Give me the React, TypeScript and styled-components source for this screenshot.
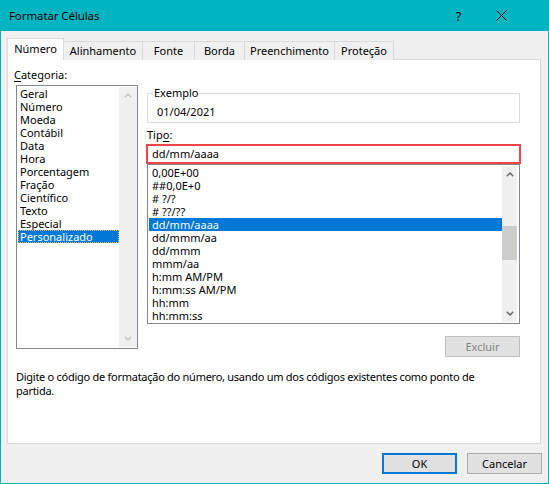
import React from "react";
import styled, { createGlobalStyle, css } from "styled-components";

const FONT = `"Noto Sans", "Open Sans", sans-serif`;

const GlobalStyle = createGlobalStyle`
  html, body { margin: 0; padding: 0; background: #ffffff; }
  body { font-family: ${FONT}; font-size: 11px; color: #000; }
  * { box-sizing: border-box; }
`;

const Window = styled.div`
  width: 549px;
  height: 484px;
  display: flex;
  flex-direction: column;
  background: #f0f0f0;
  border: 1px solid #00b4c2;
  border-top: none;
`;

const TitleBar = styled.div`
  height: 31px;
  flex: none;
  display: flex;
  align-items: center;
  background: #00b4c2;
  margin: 0 -1px;
  padding-left: 9px;
  padding-right: 27px;
`;

const TitleText = styled.div`
  flex: 1;
  font-size: 11.5px;
  line-height: 16px;
  letter-spacing: -0.1px;
  color: #000;
`;

const TitleButton = styled.div<{ $w: number }>`
  width: ${(p) => p.$w}px;
  height: 31px;
  display: flex;
  align-items: center;
  justify-content: center;
  font-size: 13px;
  color: #000;
`;

const Body = styled.div`
  flex: 1;
  display: flex;
  flex-direction: column;
  padding: 7px 7px 0 6px;
`;

const TabStrip = styled.div`
  height: 22px;
  display: flex;
  align-items: flex-end;
  margin-bottom: -1px;
  position: relative;
  z-index: 1;
`;

const Tab = styled.div<{ $active?: boolean; $w: number }>`
  width: ${(p) => p.$w}px;
  display: flex;
  align-items: center;
  justify-content: center;
  border: 1px solid #d9d9d9;
  border-bottom: none;
  margin-left: -1px;
  font-size: 11px;
  line-height: 14px;
  &:first-child { margin-left: 0; }
  ${(p) =>
    p.$active
      ? css`
          height: 22px;
          background: #ffffff;
          padding-bottom: 2px;
          position: relative;
          z-index: 1;
        `
      : css`
          height: 19px;
          background: #f0f0f0;
          padding-bottom: 1px;
        `}
`;

const Panel = styled.div`
  height: 385px;
  flex: none;
  background: #ffffff;
  border: 1px solid #d9d9d9;
  padding: 8px 6px 0 6px;
  display: flex;
  flex-direction: column;
`;

const Columns = styled.div`
  display: grid;
  grid-template-columns: 124px 373px;
  column-gap: 9px;
`;

const Column = styled.div`
  display: flex;
  flex-direction: column;
`;

const FieldLabel = styled.div<{ $mt?: number }>`
  font-size: 11px;
  line-height: 14px;
  margin-top: ${(p) => p.$mt ?? 0}px;
  u { text-decoration-thickness: 1px; text-underline-offset: 2px; }
`;

const ListBox = styled.div<{ $h: number; $ml?: number; $mt?: number; $pad: string }>`
  height: ${(p) => p.$h}px;
  margin-left: ${(p) => p.$ml ?? 0}px;
  margin-top: ${(p) => p.$mt ?? 0}px;
  border: 1px solid #828790;
  background: #ffffff;
  padding: ${(p) => p.$pad};
  display: flex;
`;

const ListItems = styled.div`
  flex: 1;
  display: flex;
  flex-direction: column;
  min-width: 0;
`;

const ListItem = styled.div<{ $selected?: boolean; $focused?: boolean; $pl: number }>`
  height: 13px;
  line-height: 13px;
  font-size: 11px;
  padding-left: ${(p) => p.$pl}px;
  white-space: nowrap;
  color: #000;
  ${(p) =>
    p.$selected &&
    css`
      background: #0078d7;
      color: #ffffff;
    `}
  ${(p) =>
    p.$focused &&
    css`
      outline: 1px dotted #eab35e;
      outline-offset: -1px;
    `}
`;

const ScrollBar = styled.div<{ $w: number }>`
  width: ${(p) => p.$w}px;
  flex: none;
  background: #f0f0f0;
  display: flex;
  flex-direction: column;
`;

const ScrollArrow = styled.div`
  height: 17px;
  flex: none;
  display: flex;
  align-items: center;
  justify-content: center;
`;

const ScrollTrack = styled.div`
  flex: 1;
  display: flex;
  flex-direction: column;
`;

const Thumb = styled.div<{ $top: number; $h: number }>`
  margin-top: ${(p) => p.$top}px;
  height: ${(p) => p.$h}px;
  background: #cdcdcd;
`;

const GroupBox = styled.fieldset`
  margin: 18px 0 0 0;
  padding: 5px 8px 3px 8px;
  border: 1px solid #dcdcdc;
  min-width: 0;
`;

const Legend = styled.legend`
  padding: 0 1px;
  margin-left: -3px;
  font-size: 11px;
  line-height: 14px;
`;

const SampleText = styled.div`
  font-size: 11px;
  line-height: 14px;
  padding-left: 1px;
`;

const TypeInput = styled.div`
  height: 20px;
  margin: 2px -1px 0 -1px;
  border: 2px solid #f0434a;
  background: #ffffff;
  padding-left: 4px;
  display: flex;
  align-items: center;
  font-size: 11px;
  line-height: 14px;
`;

const ActionButton = styled.div<{ $disabled?: boolean }>`
  align-self: flex-end;
  width: 75px;
  height: 21px;
  margin-top: 12px;
  display: flex;
  align-items: center;
  justify-content: center;
  background: #e1e1e1;
  border: 1px solid ${(p) => (p.$disabled ? "#bfbfbf" : "#adadad")};
  color: ${(p) => (p.$disabled ? "#838383" : "#000")};
  font-size: 11px;
`;

const Description = styled.div`
  margin: 13px 0 0 2px;
  font-size: 11px;
  line-height: 14px;
  letter-spacing: -0.27px;
`;

const Footer = styled.div`
  flex: 1;
  display: flex;
  justify-content: flex-end;
  align-items: flex-start;
  gap: 10px;
  padding: 9px 0 0 0;
  margin-right: -1px;
`;

const DialogButton = styled.div<{ $default?: boolean }>`
  width: 75px;
  height: 21px;
  display: flex;
  align-items: center;
  justify-content: center;
  background: #e1e1e1;
  font-size: 11px;
  color: #000;
  border: ${(p) => (p.$default ? "2px solid #0078d7" : "1px solid #adadad")};
`;

const Chevron = ({ up, color }: { up?: boolean; color: string }) => (
  <svg width="8" height="5" viewBox="0 0 8 5">
    <polyline
      points={up ? "0.8,4.3 4,1.1 7.2,4.3" : "0.8,0.7 4,3.9 7.2,0.7"}
      fill="none"
      stroke={color}
      strokeWidth="1.4"
    />
  </svg>
);

const CloseIcon = () => (
  <svg width="11" height="11" viewBox="0 0 11 11">
    <path d="M0.5 0.5 L10.5 10.5 M10.5 0.5 L0.5 10.5" stroke="#000" strokeWidth="1" />
  </svg>
);

const tabs = [
  { label: "Número", w: 57, active: true },
  { label: "Alinhamento", w: 80 },
  { label: "Fonte", w: 53 },
  { label: "Borda", w: 51 },
  { label: "Preenchimento", w: 91 },
  { label: "Proteção", w: 60 },
];

const categories = [
  "Geral",
  "Número",
  "Moeda",
  "Contábil",
  "Data",
  "Hora",
  "Porcentagem",
  "Fração",
  "Científico",
  "Texto",
  "Especial",
  "Personalizado",
];

const types = [
  "0,00E+00",
  "##0,0E+0",
  "# ?/?",
  "# ??/??",
  "dd/mm/aaaa",
  "dd/mmm/aa",
  "dd/mmm",
  "mmm/aa",
  "h:mm AM/PM",
  "h:mm:ss AM/PM",
  "hh:mm",
  "hh:mm:ss",
];

export default function App() {
  return (
    <>
      <GlobalStyle />
      <Window>
        <TitleBar>
          <TitleText>Formatar Células</TitleText>
          <TitleButton $w={43}>?</TitleButton>
          <TitleButton $w={42}>
            <CloseIcon />
          </TitleButton>
        </TitleBar>
        <Body>
          <TabStrip>
            {tabs.map((t) => (
              <Tab key={t.label} $w={t.w} $active={t.active}>
                {t.label}
              </Tab>
            ))}
          </TabStrip>
          <Panel>
            <Columns>
              <Column>
                <FieldLabel>
                  <u>C</u>ategoria:
                </FieldLabel>
                <ListBox $h={264} $ml={2} $mt={3} $pad="1px 0 1px 1px">
                  <ListItems>
                    {categories.map((c) => (
                      <ListItem
                        key={c}
                        $pl={2}
                        $selected={c === "Personalizado"}
                        $focused={c === "Personalizado"}
                      >
                        {c}
                      </ListItem>
                    ))}
                  </ListItems>
                  <ScrollBar $w={18}>
                    <ScrollArrow>
                      <Chevron up color="#c2c2c2" />
                    </ScrollArrow>
                    <ScrollTrack />
                    <ScrollArrow>
                      <Chevron color="#c2c2c2" />
                    </ScrollArrow>
                  </ScrollBar>
                </ListBox>
              </Column>
              <Column>
                <GroupBox>
                  <Legend>Exemplo</Legend>
                  <SampleText>01/04/2021</SampleText>
                </GroupBox>
                <FieldLabel $mt={5}>
                  Tip<u>o</u>:
                </FieldLabel>
                <TypeInput>dd/mm/aaaa</TypeInput>
                <ListBox $h={160} $pad="1px 2px 1px 1px">
                  <ListItems>
                    {types.map((t) => (
                      <ListItem key={t} $pl={3} $selected={t === "dd/mm/aaaa"}>
                        {t}
                      </ListItem>
                    ))}
                  </ListItems>
                  <ScrollBar $w={15}>
                    <ScrollArrow>
                      <Chevron up color="#606060" />
                    </ScrollArrow>
                    <ScrollTrack>
                      <Thumb $top={43} $h={34} />
                    </ScrollTrack>
                    <ScrollArrow>
                      <Chevron color="#606060" />
                    </ScrollArrow>
                  </ScrollBar>
                </ListBox>
                <ActionButton $disabled>Excluir</ActionButton>
              </Column>
            </Columns>
            <Description>
              Digite o código de formatação do número, usando um dos códigos existentes como ponto de
              <br />
              partida.
            </Description>
          </Panel>
          <Footer>
            <DialogButton $default>OK</DialogButton>
            <DialogButton>Cancelar</DialogButton>
          </Footer>
        </Body>
      </Window>
    </>
  );
}
